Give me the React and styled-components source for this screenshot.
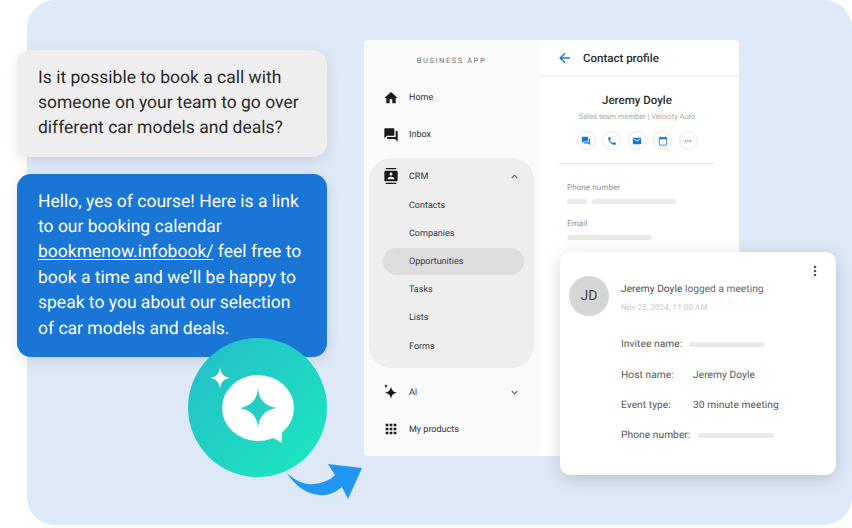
import React from "react";
import styled, { createGlobalStyle } from "styled-components";

const GlobalStyle = createGlobalStyle`
  html, body { margin: 0; padding: 0; background: #fff; }
  * { box-sizing: border-box; }
  body { font-family: Roboto, "Liberation Sans", sans-serif; text-rendering: geometricPrecision; }
`;

const Page = styled.div`
  width: 852px;
  height: 528px;
  overflow: hidden;
  background: #fff;
`;

const Panel = styled.div`
  position: relative;
  display: flex;
  align-items: flex-start;
  gap: 37px;
  margin-left: 27px;
  width: 825px;
  height: 525px;
  border-radius: 28px;
  background: #dde9f7;
`;

const ChatColumn = styled.div`
  display: flex;
  flex-direction: column;
  gap: 17px;
  width: 310px;
  flex: none;
  margin: 50px 0 0 -10px;
`;

const Bubble = styled.div`
  height: ${(p) => (p.$reply ? 183 : 107)}px;
  padding: 15.500px 21px 0;
  border-radius: 14px;
  font-size: 17.5px;
  line-height: 25.4px;
  color: ${(p) => (p.$reply ? "#fff" : "#2a2a2a")};
  background: ${(p) => (p.$reply ? "#1976d6" : "#eeeeee")};
  box-shadow: 0 4px 14px rgba(0, 0, 0, 0.1);
  a { color: inherit; text-decoration: underline; text-underline-offset: 2px; text-decoration-thickness: 1px; }
`;

const AppWindow = styled.div`
  position: relative;
  display: flex;
  width: 375px;
  height: 416px;
  flex: none;
  margin-top: 40px;
`;

const Sidebar = styled.nav`
  width: 177px;
  flex: none;
  padding: 0 7px 0 5px;
  background: #fafafa;
  border-radius: 4px 0 0 4px;
`;

const BrandTitle = styled.div`
  height: 39px;
  display: flex;
  align-items: center;
  justify-content: center;
  padding-top: 1px;
  font-size: 7.5px;
  letter-spacing: 1.55px;
  color: #707070;
`;

const NavRow = styled.div`
  display: flex;
  align-items: center;
  height: ${(p) => p.$h || 37}px;
  padding: 0 14px;
  font-size: 9px;
  color: #333;
  span { margin-left: 10px; flex: 1; padding-top: 1.5px; }
  svg.nav-icon { width: 16px; height: 16px; flex: none; fill: #1a1a1a; }
`;

const Chevron = styled.svg`
  width: 9px;
  height: 9px;
  margin-right: 1px;
  fill: none;
  stroke: #555;
  stroke-width: 1.2;
`;

const NavGroup = styled.div`
  display: flex;
  flex-direction: column;
  gap: 1.2px;
  margin: 5px 0 5.5px;
  padding-top: 4px;
  height: 210px;
  background: #eeeeee;
  border-radius: 22px;
`;

const SubRow = styled.div`
  display: flex;
  align-items: center;
  flex: none;
  height: 27px;
  margin: 0 10px 0 14px;
  padding: 2px 0 0 26px;
  border-radius: 14px;
  font-size: 9px;
  color: #3a3a3a;
  background: ${(p) => (p.$active ? "#dddddd" : "transparent")};
`;

const Detail = styled.section`
  flex: 1;
  background: #fff;
  border-radius: 0 5px 5px 0;
`;

const DetailHeader = styled.header`
  display: flex;
  align-items: center;
  gap: 12px;
  height: 37px;
  padding-left: 18px;
  border-bottom: 2px solid #f4f4f4;
  font-size: 11.5px;
  font-weight: 500;
  color: #2b2b2b;
  svg { width: 12px; height: 12px; fill: none; stroke: #1976d6; stroke-width: 1.4; }
`;

const ProfileHead = styled.div`
  display: flex;
  flex-direction: column;
  align-items: center;
  margin: 0 24px 0 18px;
  padding: 16px 0 13px;
  border-bottom: 1px solid #e8e8e8;
`;

const ProfileName = styled.div`
  font-size: 11.5px;
  font-weight: 500;
  line-height: 14px;
  color: #2b2b2b;
`;

const ProfileRole = styled.div`
  margin-top: 5px;
  font-size: 7.5px;
  line-height: 10px;
  color: #a8a8a8;
`;

const ActionRow = styled.div`
  display: flex;
  gap: 6.5px;
  margin-top: 9px;
`;

const ActionButton = styled.div`
  display: flex;
  align-items: center;
  justify-content: center;
  width: 19px;
  height: 19px;
  border: 1px solid #e8e8e8;
  border-radius: 50%;
  svg { width: 10px; height: 10px; fill: #1976d6; }
`;

const FieldList = styled.div`
  padding: 18px 0 0 26px;
`;

const FieldLabel = styled.div`
  font-size: 8px;
  line-height: 11px;
  letter-spacing: 0.1px;
  color: #8f8f8f;
  margin-top: ${(p) => p.$top || 0}px;
`;

const SkeletonRow = styled.div`
  display: flex;
  gap: 5px;
  margin-top: 6px;
`;

const Skeleton = styled.div`
  width: ${(p) => p.$w}px;
  height: 5px;
  border-radius: 3px;
  background: #e9e9e9;
  flex: none;
`;

const MeetingCard = styled.article`
  position: absolute;
  left: 196px;
  top: 212px;
  width: 276px;
  height: 223px;
  padding: 24px 0 0 9px;
  border-radius: 10px;
  background: #fff;
  box-shadow: 0 4px 18px rgba(0, 0, 0, 0.16);
`;

const MoreButton = styled.svg`
  position: absolute;
  top: 13px;
  right: 19px;
  width: 4px;
  height: 12px;
  fill: #555;
`;

const CardHead = styled.div`
  display: flex;
  gap: 12px;
`;

const Avatar = styled.div`
  display: flex;
  align-items: center;
  justify-content: center;
  width: 40px;
  height: 40px;
  border-radius: 50%;
  background: #d6d6d6;
  font-size: 14px;
  color: #444;
`;

const CardTitle = styled.div`
  margin-top: 7px;
  font-size: 10.1px;
  line-height: 14px;
  letter-spacing: 0.06px;
  color: #666;
  b { font-weight: 400; color: #4a4a4a; }
`;

const CardDate = styled.div`
  margin-top: 6px;
  font-size: 8px;
  line-height: 10px;
  letter-spacing: 0.1px;
  color: #c4c4c4;
`;

const MeetingFields = styled.div`
  display: flex;
  flex-direction: column;
  margin: 13.500px 0 0 52px;
`;

const MeetingRow = styled.div`
  display: flex;
  align-items: center;
  height: 30.4px;
  font-size: 10.2px;
  letter-spacing: 0.06px;
  color: #555;
`;

const MeetingLabel = styled.div`
  width: ${(p) => p.$w}px;
  flex: none;
`;

const AssistantBadge = styled.div`
  position: absolute;
  left: 161px;
  top: 338px;
  width: 139px;
  height: 139px;
  border-radius: 50%;
  background: linear-gradient(135deg, #25bcc8 0%, #1be9c0 100%);
  svg { display: block; width: 139px; height: 139px; }
`;

const CurvedArrow = styled.svg`
  position: absolute;
  left: 258px;
  top: 460px;
  width: 80px;
  height: 42px;
  fill: #2196f3;
`;

const icons = {
  home: "M10 20v-6h4v6h5v-8h3L12 3 2 12h3v8z",
  forum: "M21 6h-2v9H6v2c0 .55.45 1 1 1h11l4 4V7c0-.55-.45-1-1-1zm-4 6V3c0-.55-.45-1-1-1H3c-.55 0-1 .45-1 1v14l4-4h10c.55 0 1-.45 1-1z",
  contacts: "M20 0H4v2h16V0zM4 24h16v-2H4v2zM20 4H4c-1.1 0-2 .9-2 2v12c0 1.1.9 2 2 2h16c1.1 0 2-.9 2-2V6c0-1.1-.9-2-2-2zm-8 2.75c1.24 0 2.25 1.01 2.25 2.25s-1.01 2.25-2.25 2.25S9.75 10.24 9.75 9 10.76 6.75 12 6.75zM17 17H7v-1.5c0-1.67 3.33-2.5 5-2.5s5 .83 5 2.5V17z",
  ai: "M12 3.5C12.800 9.500 15.500 12.200 21 13C15.500 13.800 12.800 16.500 12 22.500C11.200 16.500 8.500 13.800 3 13C8.500 12.200 11.200 9.500 12 3.500zM4.500 0C4.900 1.800 5.700 2.600 7.500 3C5.700 3.400 4.900 4.200 4.500 6C4.100 4.200 3.300 3.400 1.500 3C3.300 2.600 4.100 1.800 4.500 0z",
  apps: "M4 8h4V4H4v4zm6 12h4v-4h-4v4zm-6 0h4v-4H4v4zm0-6h4v-4H4v4zm6 0h4v-4h-4v4zm6-10v4h4V4h-4zm-6 4h4V4h-4v4zm6 6h4v-4h-4v4zm0 6h4v-4h-4v4z",
  phone: "M6.62 10.79c1.44 2.83 3.76 5.14 6.59 6.59l2.2-2.2c.27-.27.67-.36 1.02-.24 1.12.37 2.33.57 3.57.57.55 0 1 .45 1 1V20c0 .55-.45 1-1 1-9.39 0-17-7.61-17-17 0-.55.45-1 1-1h3.5c.55 0 1 .45 1 1 0 1.25.2 2.45.57 3.57.11.35.03.74-.25 1.02l-2.2 2.2z",
  email: "M20 4H4c-1.1 0-1.99.9-1.99 2L2 18c0 1.1.9 2 2 2h16c1.1 0 2-.9 2-2V6c0-1.1-.9-2-2-2zm0 4l-8 5-8-5V6l8 5 8-5v2z",
  calendar: "M20 3h-1V1h-2v2H7V1H5v2H4c-1.1 0-2 .9-2 2v16c0 1.1.9 2 2 2h16c1.1 0 2-.9 2-2V5c0-1.1-.9-2-2-2zm0 18H4V8h16v13z",
  dots: "M6 10a2 2 0 1 0 0 4 2 2 0 0 0 0-4zm6 0a2 2 0 1 0 0 4 2 2 0 0 0 0-4zm6 0a2 2 0 1 0 0 4 2 2 0 0 0 0-4z",
};

const Icon = ({ name, className }) => (
  <svg viewBox="0 0 24 24" className={className}>
    <path d={icons[name]} />
  </svg>
);

const App = () => (
  <Page>
    <GlobalStyle />
    <Panel>
      <ChatColumn>
        <Bubble>
          Is it possible to book a call with someone on your team to go over
          different car models and deals?
        </Bubble>
        <Bubble $reply>
          Hello, yes of course! Here is a link to our booking calendar{" "}
          <a>bookmenow.infobook/</a> feel free to book a time and we’ll be happy
          to speak to you about our selection of car models and deals.
        </Bubble>
      </ChatColumn>

      <AppWindow>
        <Sidebar>
          <BrandTitle>BUSINESS APP</BrandTitle>
          <NavRow>
            <Icon name="home" className="nav-icon" />
            <span>Home</span>
          </NavRow>
          <NavRow>
            <Icon name="forum" className="nav-icon" />
            <span>Inbox</span>
          </NavRow>
          <NavGroup>
            <NavRow $h={28}>
              <Icon name="contacts" className="nav-icon" />
              <span>CRM</span>
              <Chevron viewBox="0 0 10 10"><path d="M2 6.500L5 3.500L8 6.500" /></Chevron>
            </NavRow>
            <SubRow>Contacts</SubRow>
            <SubRow>Companies</SubRow>
            <SubRow $active>Opportunities</SubRow>
            <SubRow>Tasks</SubRow>
            <SubRow>Lists</SubRow>
            <SubRow>Forms</SubRow>
          </NavGroup>
          <NavRow>
            <Icon name="ai" className="nav-icon" />
            <span>AI</span>
            <Chevron viewBox="0 0 10 10"><path d="M2 3.500L5 6.500L8 3.500" /></Chevron>
          </NavRow>
          <NavRow>
            <Icon name="apps" className="nav-icon" />
            <span>My products</span>
          </NavRow>
        </Sidebar>

        <Detail>
          <DetailHeader>
            <svg viewBox="0 0 12 12"><path d="M11 6H1.500M6 1.200L1.200 6L6 10.800" /></svg>
            Contact profile
          </DetailHeader>
          <ProfileHead>
            <ProfileName>Jeremy Doyle</ProfileName>
            <ProfileRole>Sales team member | Velocity Auto</ProfileRole>
            <ActionRow>
              <ActionButton><Icon name="forum" /></ActionButton>
              <ActionButton><Icon name="phone" /></ActionButton>
              <ActionButton><Icon name="email" /></ActionButton>
              <ActionButton><Icon name="calendar" /></ActionButton>
              <ActionButton><Icon name="dots" /></ActionButton>
            </ActionRow>
          </ProfileHead>
          <FieldList>
            <FieldLabel>Phone number</FieldLabel>
            <SkeletonRow>
              <Skeleton $w={20} />
              <Skeleton $w={84} />
            </SkeletonRow>
            <FieldLabel $top={14}>Email</FieldLabel>
            <SkeletonRow>
              <Skeleton $w={85} />
            </SkeletonRow>
          </FieldList>
        </Detail>

        <MeetingCard>
          <MoreButton viewBox="0 0 4 12">
            <circle cx="2" cy="2" r="1.300" />
            <circle cx="2" cy="6" r="1.300" />
            <circle cx="2" cy="10" r="1.300" />
          </MoreButton>
          <CardHead>
            <Avatar>JD</Avatar>
            <div>
              <CardTitle><b>Jeremy Doyle</b> logged a meeting</CardTitle>
              <CardDate>Nov 25, 2024, 11:00 AM</CardDate>
            </div>
          </CardHead>
          <MeetingFields>
            <MeetingRow>
              <MeetingLabel $w={68}>Invitee name:</MeetingLabel>
              <Skeleton $w={76} />
            </MeetingRow>
            <MeetingRow>
              <MeetingLabel $w={72}>Host name:</MeetingLabel>
              Jeremy Doyle
            </MeetingRow>
            <MeetingRow>
              <MeetingLabel $w={72}>Event type:</MeetingLabel>
              30 minute meeting
            </MeetingRow>
            <MeetingRow>
              <MeetingLabel $w={77}>Phone number:</MeetingLabel>
              <Skeleton $w={76} />
            </MeetingRow>
          </MeetingFields>
        </MeetingCard>
      </AppWindow>

      <AssistantBadge>
        <svg viewBox="0 0 139 139">
          <ellipse cx="70" cy="70" rx="36" ry="33" fill="#fff" />
          <path fill="#fff" d="M84 99L93.500 105L94 94z" />
          <path
            fill="#25cfc6"
            d="M70 50C71 62 77 68 88.500 70C77 72 71 78 70 90C69 78 63 72 51.500 70C63 68 69 62 70 50z"
          />
          <path
            fill="#fff"
            d="M32 29C33 36 35 38.500 42 40C35 41.500 33 44 32 51C31 44 29 41.500 22 40C29 38.500 31 36 32 29z"
          />
        </svg>
      </AssistantBadge>

      <CurvedArrow viewBox="0 0 80 42">
        <path d="M2 13C12 22 20 25 29 24C38 23 45 20 50 15L43 4L77 8L63 39L57 27C50 33 42 36 34 35C22 34 10 26 2 13z" />
      </CurvedArrow>
    </Panel>
  </Page>
);

export default App;
